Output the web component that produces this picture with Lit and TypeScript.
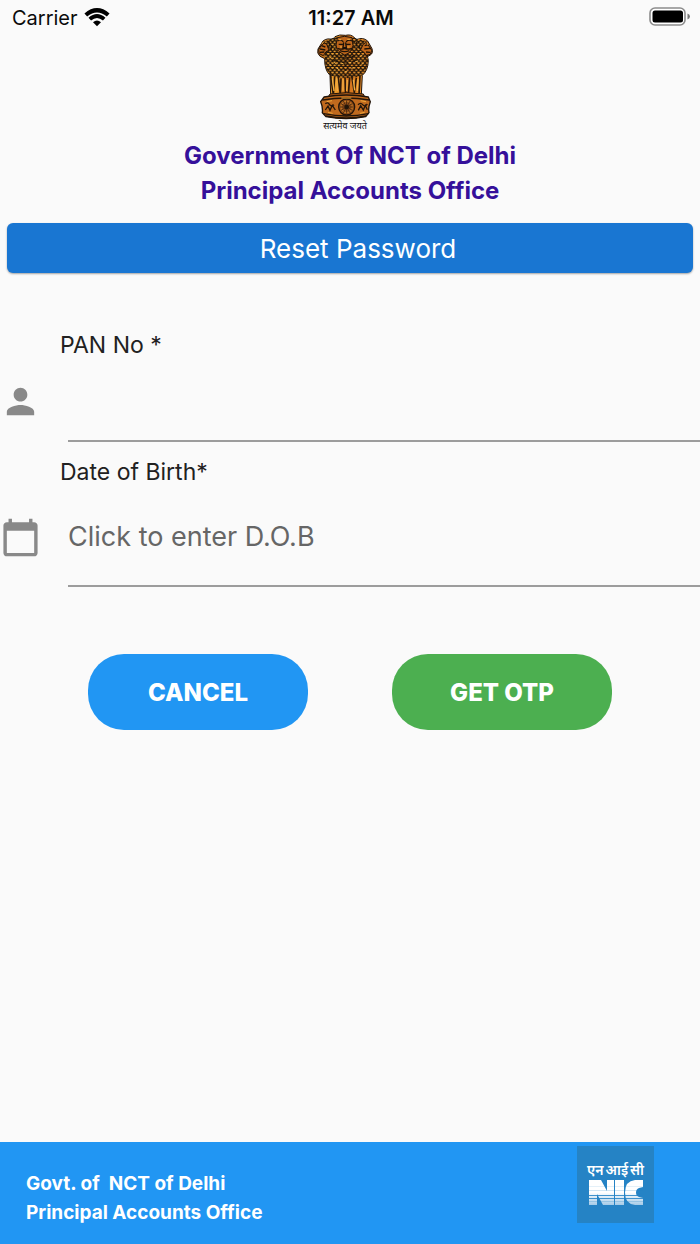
import { LitElement, html, css, svg } from "lit";
import { customElement } from "lit/decorators.js";

@customElement("status-bar")
class StatusBar extends LitElement {
  static styles = css`
    :host {
      display: grid;
      grid-template-columns: 1fr auto 1fr;
      align-items: center;
      box-sizing: border-box;
      height: 34px;
      padding: 2px 10px 0 12px;
      font: 20px/24px Inter, sans-serif;
      color: #0a0a0a;
    }
    .carrier { display: flex; align-items: center; gap: 6px; }
    .time { font-weight: 600; }
    .battery { justify-self: end; }
    svg { display: block; }
  `;
  render() {
    return html`
      <span class="carrier">Carrier
        <svg width="26" height="20" viewBox="0 0 26 20" aria-label="Wi-Fi">
          <g fill="none" stroke="#000">
            <path stroke-width="4.200" d="M1.800 7Q13-2.500 24.200 7" />
            <path stroke-width="3.800" d="M5.800 11.200Q13 4.800 20.200 11.200" />
          </g>
          <path d="M9 14.200Q13 10.800 17 14.200L13 18.200Z" />
        </svg>
      </span>
      <span class="time">11:27 AM</span>
      <svg class="battery" width="41" height="22" viewBox="0 0 41 22" aria-label="Battery full">
        <rect x="1" y="1" width="35" height="17" rx="5" fill="#fff" stroke="#8c8c8c" stroke-width="1.6" />
        <rect x="3.5" y="3.5" width="30.500" height="12" rx="2.500" />
        <path d="M38.500 6.500q2.500 1 2.500 3t-2.500 3z" fill="#777" />
      </svg>
    `;
  }
}

@customElement("state-emblem")
class StateEmblem extends LitElement {
  static styles = css`
    :host { display: flex; flex-direction: column; align-items: center; }
    svg { display: block; }
    .motto { font: 9px/12px "Noto Sans", "Noto Sans Devanagari", sans-serif; color: #111; white-space: nowrap; }
  `;
  render() {
    const spokes = Array.from({ length: 12 }, (_, i) => {
      const a = (i * Math.PI) / 6;
      return svg`<path d="M140 246L${140 + 20 * Math.cos(a)} ${246 + 20 * Math.sin(a)}" />`;
    });
    return html`
      <svg width="60" height="86" viewBox="45 27 180 258" role="img" aria-label="State Emblem of India">
        <defs>
          <linearGradient id="gold" x1="0" x2="1">
            <stop offset="0" stop-color="#b0601a" />
            <stop offset=".3" stop-color="#f0a02c" />
            <stop offset=".55" stop-color="#d0701c" />
            <stop offset=".8" stop-color="#ec8e26" />
            <stop offset="1" stop-color="#9a4c14" />
          </linearGradient>
          <pattern id="mane" width="13" height="14" patternUnits="userSpaceOnUse">
            <path d="M0 0q0 7 6.500 7t6.500-7M-6.500 7q0 7 6.500 7t6.500-7M6.500 7q0 7 6.500 7t6.500-7" fill="none" stroke="#20150a" stroke-width="4" />
            <path d="M5 3h4M11 10h3" stroke="#f0a83a" stroke-width="3" />
          </pattern>
        </defs>
        <path fill="url(#gold)" stroke="#20140a" stroke-width="3" stroke-linejoin="round"
          d="M105 35Q118 27 137 31Q153 27 162 37L170 44Q188 35 203 48L216 71Q220 85 211 90L202 95L205 107Q204 137 187 151L184 209H92L90 151Q73 135 74 101L60 94Q50 85 54 72L69 48Q82 37 101 45Z" />
        <path fill="url(#mane)" d="M103 37L160 38L200 49L205 103Q203 135 184 153Q140 166 92 152Q74 133 75 100L69 52Z" />
        <g fill="#bd651a" stroke="#20140a" stroke-width="3">
          <path d="M112 38Q133 30 156 38L159 62Q157 76 145 85L134 90L120 82Q108 75 108 60Z" />
          <path d="M72 54Q62 60 56 74L58 86L70 92L78 80L87 76L80 57Z" />
          <path d="M197 53Q208 62 215 76L211 88L199 91L190 80L181 76L190 57Z" />
        </g>
        <g fill="none" stroke="#1c1209" stroke-width="4">
          <path d="M112 48q10-6 18 2M138 50q9-8 18-2M116 58h12M140 58h12M131 52l-2 16h10l-2-16M112 70q11 5 22 0q11 5 22 0M120 77q14 6 28 0" />
          <path d="M64 62l12 4M60 72l16 3M60 82l13-1M194 62l11-3M193 72l17-2M198 81l12 1" />
          <path d="M88 50v14M94 60v16M170 50v14M178 58v14M106 92q28 16 58 0M98 104q38 20 76 0" stroke-width="3" />
        </g>
        <g stroke="#2b1a0b" fill="none" stroke-width="5">
          <path d="M91 145l9 64M104 154l-4 55M114 150l7 59M123 160l-2 48M135 157l2 52M149 157l-4 52M155 151l9 58M169 158l-7 51M180 151l-3 58" />
        </g>
        <g stroke="#f2b045" fill="none" stroke-width="4">
          <path d="M97 160l5 38M110 160l2 38M129 162v35M142 164l-2 34M160 164l4 32M174 163l-2 35" />
          <path d="M102 112l8 5M122 113l9 4M145 112l9 1M166 110l9-2M88 96l7 4M180 94l7-3M111 130l7 4M154 130l8-2M88 118l6 3M184 118l6-3M134 140h8M116 44h8M142 43h9M65 56l6-4M200 55l4 4M120 66h6M142 66h7" stroke-width="3" />
        </g>
        <path d="M90 207Q139 199 190 207L195 218H83Z" fill="#b9621a" stroke="#20140a" stroke-width="3" />
        <path d="M72 216Q139 204 205 216L211 230Q204 248 207 263L197 275Q139 287 78 275L67 263Q69 246 62 230Z" fill="#c06a1e" stroke="#20140a" stroke-width="4" />
        <g fill="none" stroke="#24160a" stroke-width="4">
          <path d="M67 225Q139 213 208 225M71 266Q139 280 205 266M78 273Q139 285 198 273" />
          <path d="M76 236q7-6 12 2t14 1M76 255l8-12l6 13l7-15l9 14M174 239q8-8 14 0t14-2M175 256l7-14l8 13l6-14l6 13" />
          <circle cx="140" cy="246" r="24" fill="#9c5219" />
          <circle cx="140" cy="246" r="17" stroke="#d8912f" stroke-width="2" />
          <g stroke-width="2">${spokes}</g>
          <circle cx="140" cy="246" r="5" fill="#24160a" />
        </g>
        <path d="M80 230l16-3M182 227l16 3M84 262l14 3M180 265l14-3M124 219h30" stroke="#f0a83a" stroke-width="3" />
      </svg>
      <span class="motto" lang="hi">सत्यमेव जयते</span>
    `;
  }
}

@customElement("nic-logo")
class NicLogo extends LitElement {
  static styles = css`
    :host {
      display: flex;
      flex-direction: column;
      align-items: center;
      box-sizing: border-box;
      width: 77px;
      height: 77px;
      padding-top: 14px;
      background: #2583c5;
      color: #fff;
    }
    .hindi {
      display: flex;
      gap: 2px;
      font: 600 14px/20px "Noto Sans", "Noto Sans Devanagari", sans-serif;
      white-space: nowrap;
    }
    svg { display: block; }
  `;
  render() {
    return html`
      <span class="hindi" lang="hi"><span>एन</span> <span>आई</span> <span>सी</span></span>
      <svg width="54" height="25" viewBox="0 0 54 25" role="img" aria-label="NIC">
        <defs>
          <linearGradient id="fade" x2="0" y2="1">
            <stop offset=".5" stop-color="#fff" />
            <stop offset="1" stop-color="#a4cbe8" />
          </linearGradient>
        </defs>
        <g fill="url(#fade)">
          <path d="M0 0H12L18 11V0H25V25H14L8 14V25H0Z" />
          <path d="M26 0H35V25H26Z" />
          <path d="M54 0V7L50 8Q47 9 47 12.500T50 17L54 18V25H46Q36 24 36 12.500T46 0Z" />
        </g>
        <g stroke="#2583c5">
          <path d="M0 6.500H54" stroke-opacity=".12" />
          <path d="M0 10.500H54" stroke-opacity=".2" />
          <path d="M0 15.500H54M0 18.500H54" stroke-opacity=".85" />
          <path d="M0 21.500H54" stroke-opacity=".25" />
        </g>
      </svg>
    `;
  }
}

@customElement("app-root")
class AppRoot extends LitElement {
  static styles = css`
    :host {
      display: flex;
      flex-direction: column;
      min-height: 100vh;
      overflow-x: hidden;
      background: #fafafa;
      font-family: Inter, sans-serif;
    }
    state-emblem { margin-right: 10px; }
    main { flex: 1; }
    .office {
      margin: 6px 0 0;
      text-align: center;
      font: 700 24px/35px Inter, sans-serif;
      color: #35109a;
    }
    .banner {
      margin: 15px 7px 0;
      padding: 1px 0 0 16px;
      border-radius: 6px;
      background: #1976d2;
      box-shadow: 0 1px 2px rgb(0 0 0 / 35%);
      color: #fff;
      text-align: center;
      font: 400 26px/49px Inter, sans-serif;
    }
    form { padding-top: 57px; }
    .label {
      display: block;
      padding-left: 60px;
      font-size: 23px;
      line-height: 30px;
      color: #212121;
    }
    .row { display: flex; align-items: center; gap: 27px; }
    .row svg { flex: none; fill: #898989; }
    .row input {
      flex: 1;
      min-width: 0;
      box-sizing: border-box;
      padding: 0;
      border: 0;
      border-bottom: 2px solid #9c9c9c;
      border-radius: 0;
      outline: 0;
      background: none;
      font: 27px/32px Inter, sans-serif;
      color: #212121;
    }
    .row input::placeholder { color: #666; opacity: 1; }
    .pan input { height: 82px; }
    .dob input { height: 100px; }
    .pan + .label { margin-top: 15px; }
    .actions {
      display: flex;
      justify-content: center;
      gap: 84px;
      padding: 67px 24px 24px;
    }
    button {
      width: 220px;
      height: 76px;
      padding: 2px 0 0;
      border: 0;
      border-radius: 36px;
      color: #fff;
      font: 800 24px/36px Inter, sans-serif;
    }
    .cancel { background: #2196f3; }
    .otp { background: #4caf50; }
    footer {
      display: flex;
      justify-content: space-between;
      align-items: flex-start;
      box-sizing: border-box;
      min-height: 102px;
      padding: 4px 46px 0 26px;
      background: #2196f3;
      color: #fff;
    }
    .credit {
      margin: 0;
      padding-top: 23px;
      font: 700 19px/29px Inter, sans-serif;
    }
  `;
  render() {
    return html`
      <status-bar></status-bar>
      <main>
        <state-emblem></state-emblem>
        <h1 class="office">Government Of NCT of Delhi<br />Principal Accounts Office</h1>
        <h2 class="banner">Reset Password</h2>
        <form>
          <label class="label" for="pan">PAN No *</label>
          <div class="row pan">
            <svg width="41" height="41" viewBox="0 0 24 24" aria-hidden="true">
              <path d="M12 12c2.210 0 4-1.790 4-4s-1.790-4-4-4-4 1.790-4 4 1.790 4 4 4zm0 2c-2.670 0-8 1.340-8 4v2h16v-2c0-2.660-5.330-4-8-4z" />
            </svg>
            <input id="pan" type="text" />
          </div>
          <label class="label" for="dob">Date of Birth*</label>
          <div class="row dob">
            <svg width="41" height="41" viewBox="0 0 24 24" aria-hidden="true">
              <path d="M20 3h-1V1h-2v2H7V1H5v2H4c-1.100 0-2 .9-2 2v16c0 1.100.9 2 2 2h16c1.100 0 2-.9 2-2V5c0-1.100-.9-2-2-2zm0 18H4V8h16v13z" />
            </svg>
            <input id="dob" type="text" placeholder="Click to enter D.O.B" />
          </div>
          <div class="actions">
            <button class="cancel" type="button">CANCEL</button>
            <button class="otp" type="button">GET OTP</button>
          </div>
        </form>
      </main>
      <footer>
        <p class="credit">Govt. of&nbsp; NCT of Delhi<br />Principal Accounts Office</p>
        <nic-logo></nic-logo>
      </footer>
    `;
  }
}
